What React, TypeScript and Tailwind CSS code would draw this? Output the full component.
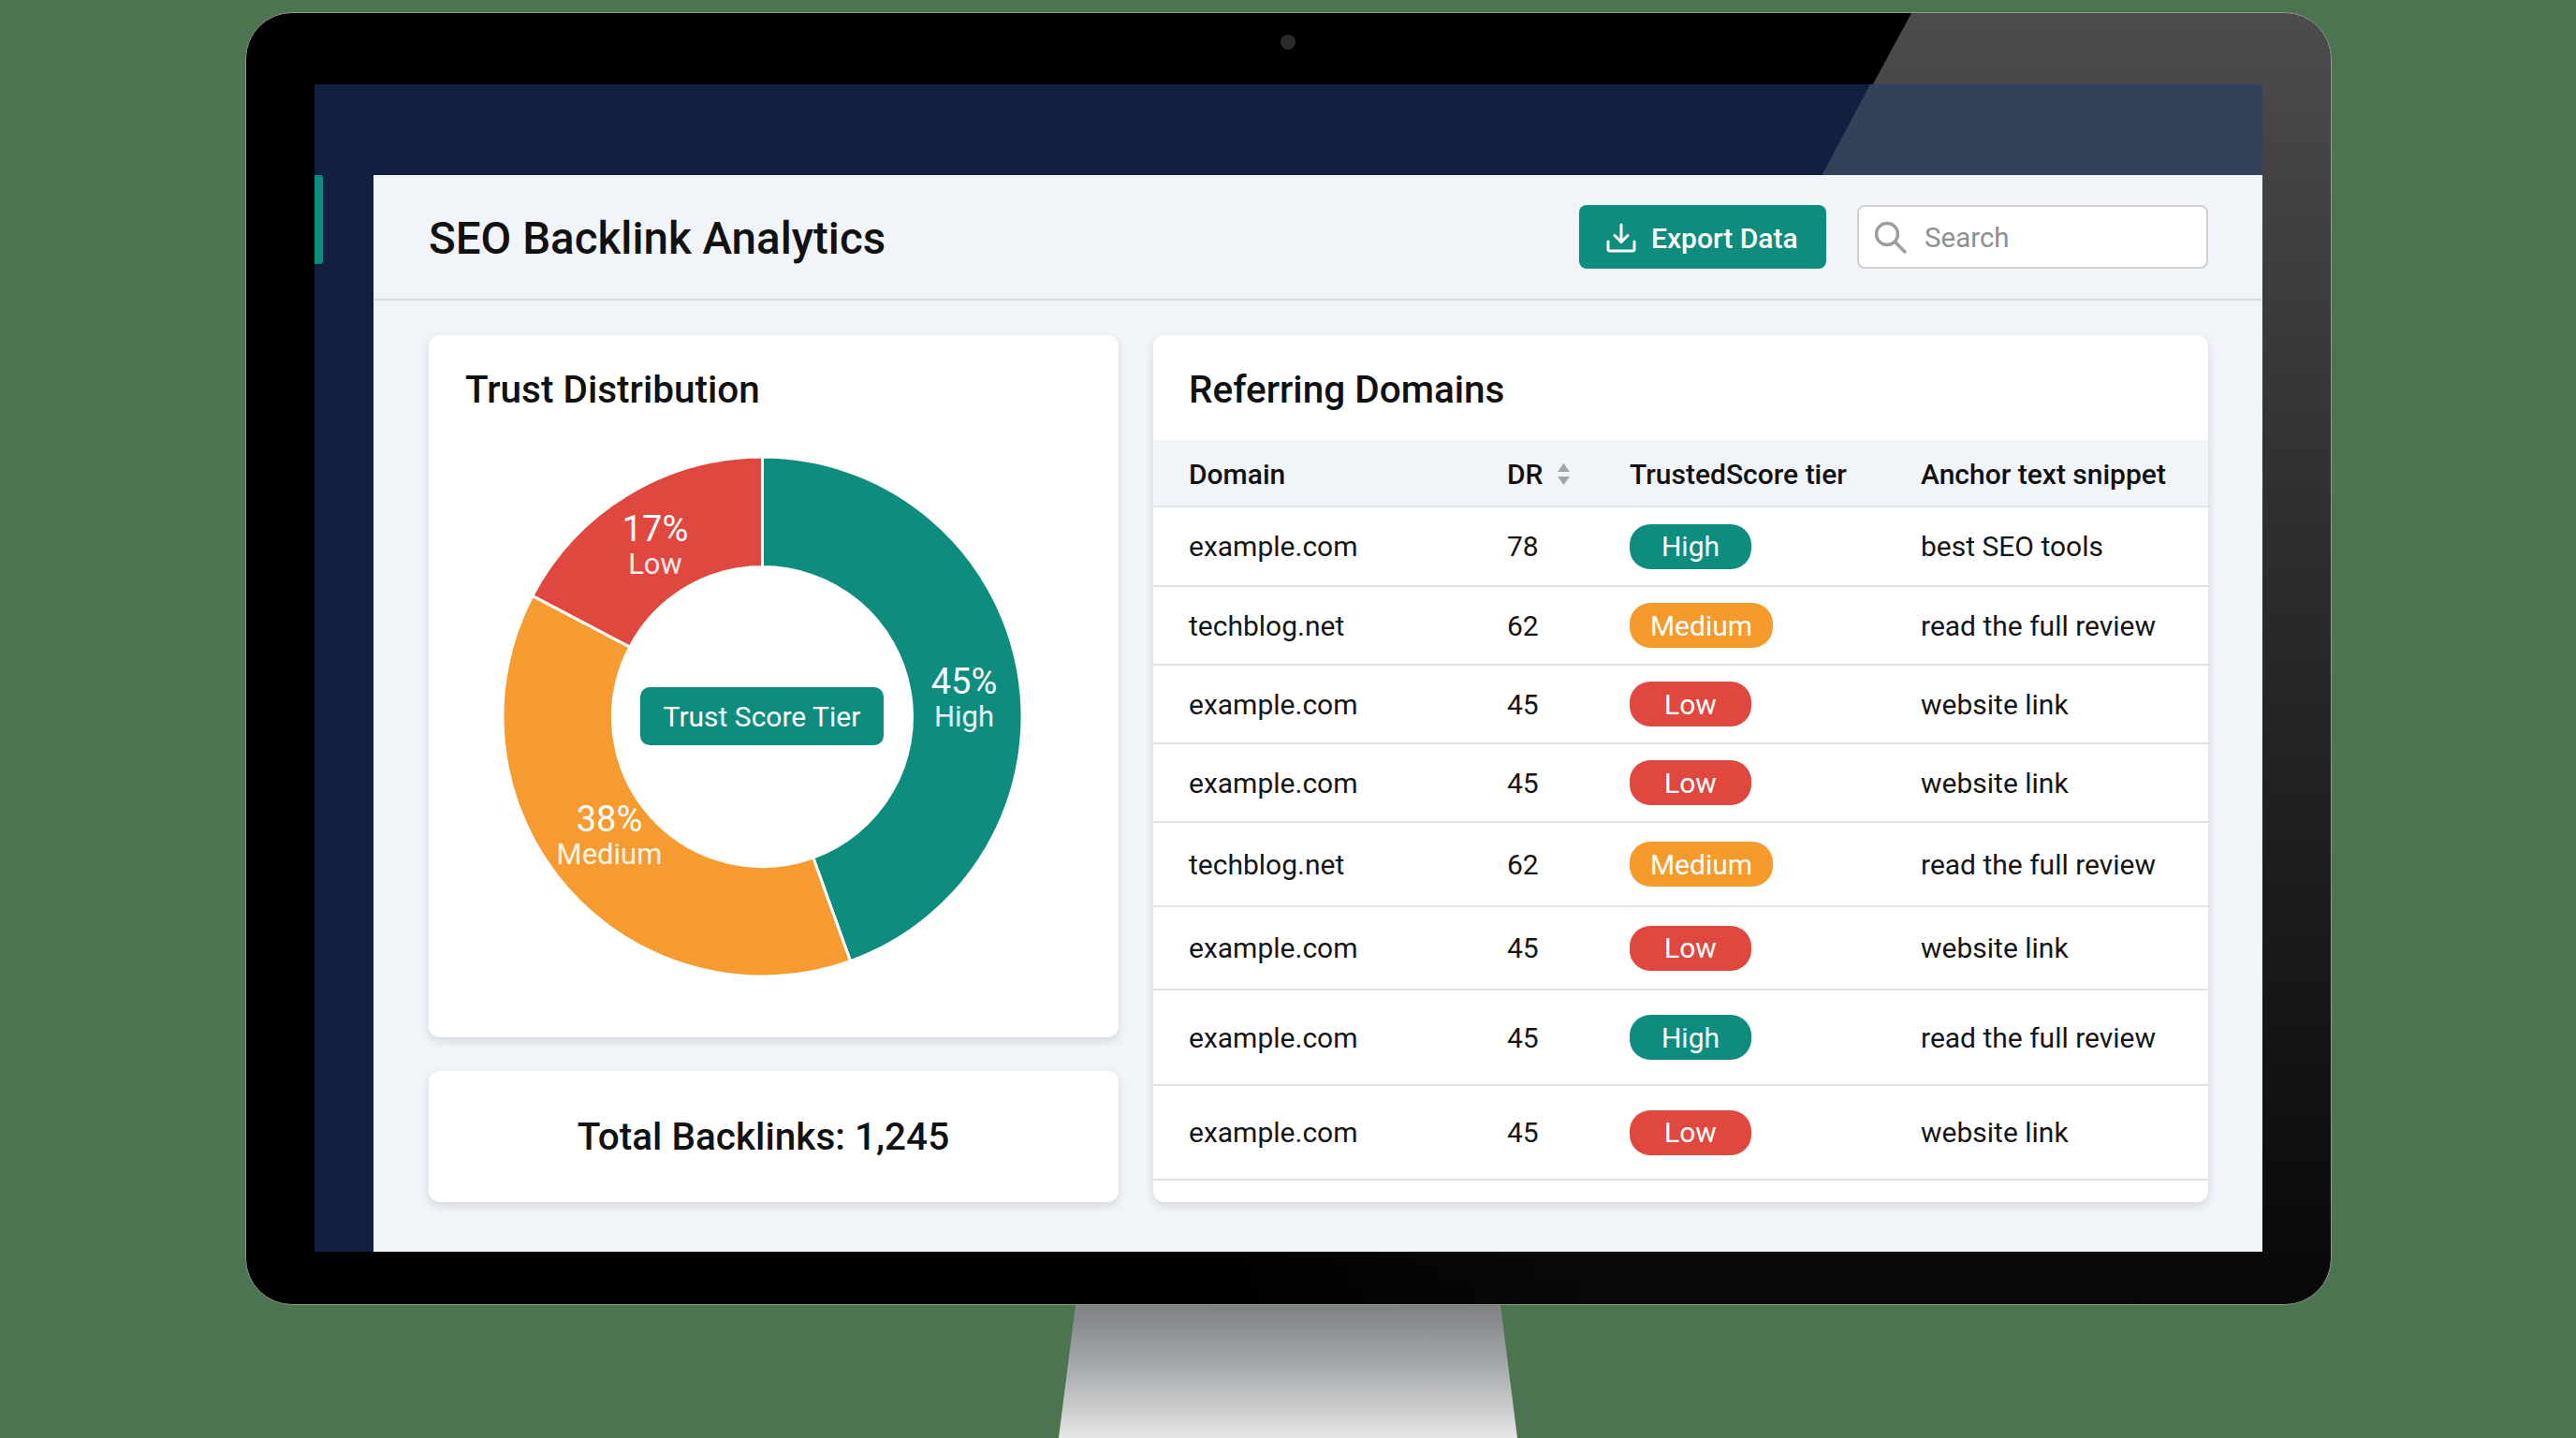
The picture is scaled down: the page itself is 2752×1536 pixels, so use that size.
// SEO backlink dashboard shown on a desktop monitor

const rows = [
  { domain: 'example.com', dr: 78, tier: 'High', anchor: 'best SEO tools', height: 'h-[85px]' },
  { domain: 'techblog.net', dr: 62, tier: 'Medium', anchor: 'read the full review', height: 'h-[84px]' },
  { domain: 'example.com', dr: 45, tier: 'Low', anchor: 'website link', height: 'h-[84px]' },
  { domain: 'example.com', dr: 45, tier: 'Low', anchor: 'website link', height: 'h-[84px]' },
  { domain: 'techblog.net', dr: 62, tier: 'Medium', anchor: 'read the full review', height: 'h-[90px]' },
  { domain: 'example.com', dr: 45, tier: 'Low', anchor: 'website link', height: 'h-[89px]' },
  { domain: 'example.com', dr: 45, tier: 'High', anchor: 'read the full review', height: 'h-[102px]' },
  { domain: 'example.com', dr: 45, tier: 'Low', anchor: 'website link', height: 'h-[101px]' },
];

const tierStyles: Record<string, string> = {
  High: 'w-[130px] bg-[#0e8d7f]',
  Medium: 'w-[153px] bg-[#f59b2e]',
  Low: 'w-[130px] bg-[#e0483f]',
};

const segments = [
  { from: 0, to: 0.445, color: '#0e8c7e' },
  { from: 0.445, to: 0.827, color: '#f59b2f' },
  { from: 0.827, to: 1, color: '#e0473f' },
];

function arcPath(from: number, to: number) {
  const c = 278.5;
  const R = 277.5;
  const r = 160;
  const pt = (rad: number, f: number) => {
    const a = f * Math.PI * 2;
    return `${c + rad * Math.sin(a)} ${c - rad * Math.cos(a)}`;
  };
  const large = to - from > 0.5 ? 1 : 0;
  return `M${pt(R, from)} A${R} ${R} 0 ${large} 1 ${pt(R, to)} L${pt(r, to)} A${r} ${r} 0 ${large} 0 ${pt(r, from)} Z`;
}

function ChartLabel({ pct, name, pos }: { pct: string; name: string; pos: string }) {
  return (
    <div className={`absolute flex -translate-x-1/2 -translate-y-1/2 flex-col items-center text-white ${pos}`}>
      <span className="text-[38px] leading-[37px]">{pct}</span>
      <span className="text-[31px] leading-[37px] text-white/90">{name}</span>
    </div>
  );
}

function Donut() {
  return (
    <div className="relative mt-[17px] ml-[78px] h-[557px] w-[557px]">
      <svg width="557" height="557" viewBox="0 0 557 557">
        {segments.map((s) => (
          <path key={s.color} d={arcPath(s.from, s.to)} fill={s.color} stroke="#fff" strokeWidth="3" />
        ))}
      </svg>
      <ChartLabel pct="45%" name="High" pos="top-[260px] left-[494px]" />
      <ChartLabel pct="17%" name="Low" pos="top-[97px] left-[164px]" />
      <ChartLabel pct="38%" name="Medium" pos="top-[407px] left-[115px]" />
      <div className="absolute top-[247px] left-[148px] flex h-[62px] w-[260px] items-center justify-center rounded-[10px] bg-[#0e8c7e] text-[30px] text-white">
        Trust Score Tier
      </div>
    </div>
  );
}

function SortArrows() {
  return (
    <svg width="17" height="25" viewBox="0 0 17 25" className="ml-[14px]">
      <path d="M8.5 1 L15 10 L2 10 Z" fill="#a3a5a8" />
      <path d="M8.5 24 L15 15 L2 15 Z" fill="#a3a5a8" />
    </svg>
  );
}

function ReferringDomains() {
  return (
    <div className="flex h-[926px] w-[1127px] flex-col overflow-hidden rounded-[12px] bg-white shadow-[0_4px_10px_rgba(30,40,60,0.14)]">
      <h2 className="flex h-[112px] items-center px-[38px] pt-[4px] text-[40.5px] font-medium text-[#111]">
        Referring Domains
      </h2>
      <div className="grid h-[72px] grid-cols-[340px_131px_311px_1fr] items-center border-b-2 border-[#e0e3e8] bg-[#f1f4f8] pt-[3px] pl-[38px] text-[30px] font-medium text-[#111]">
        <span>Domain</span>
        <span className="flex items-center">
          DR
          <SortArrows />
        </span>
        <span>TrustedScore tier</span>
        <span>Anchor text snippet</span>
      </div>
      {rows.map((row, i) => (
        <div
          key={i}
          className={`grid grid-cols-[340px_131px_311px_1fr] items-center border-b-2 border-[#dfe2e6] pl-[38px] text-[30px] text-[#151515] ${row.height}`}
        >
          <span>{row.domain}</span>
          <span>{row.dr}</span>
          <span>
            <span className={`flex h-[48px] items-center justify-center rounded-[22px] text-[30px] text-white ${tierStyles[row.tier]}`}>
              {row.tier}
            </span>
          </span>
          <span>{row.anchor}</span>
        </div>
      ))}
    </div>
  );
}

function Dashboard() {
  return (
    <main className="relative flex-1 bg-[#f1f4f8]">
      <header className="flex h-[134px] items-center justify-between border-b-2 border-[#d9dce1] pr-[58px] pl-[59px]">
        <h1 className="pt-[5px] text-[47.5px] font-medium text-[#111]">SEO Backlink Analytics</h1>
        <div className="flex items-center gap-[33px]">
          <button className="flex h-[68px] w-[264px] items-center gap-[16px] rounded-[8px] bg-[#0e8d7f] pt-[2px] pl-[29px] text-[30px] font-medium text-white">
            <svg width="32" height="32" viewBox="0 0 32 32" fill="none" stroke="#fff" strokeWidth="3" strokeLinecap="round" strokeLinejoin="round">
              <path d="M16 2 V20" />
              <path d="M9 13.5 L16 20.5 L23 13.5" />
              <path d="M2 20 V28 Q2 30 4 30 H28 Q30 30 30 28 V20" />
            </svg>
            Export Data
          </button>
          <div className="flex h-[68px] w-[375px] items-center gap-[18px] rounded-[8px] border-2 border-[#cfd1d5] bg-white pt-[2px] pl-[16px] text-[29.5px] text-[#8d9094]">
            <svg width="36" height="36" viewBox="0 0 36 36" fill="none" stroke="#9b9da0" strokeWidth="3.5" strokeLinecap="round">
              <circle cx="14" cy="14" r="11.5" />
              <path d="M22.5 22.5 L33 33" />
            </svg>
            Search
          </div>
        </div>
      </header>
      <div className="flex gap-[37px] pt-[37px] pl-[59px]">
        <div className="flex w-[737px] flex-col gap-[36px]">
          <section className="h-[750px] rounded-[12px] bg-white shadow-[0_4px_10px_rgba(30,40,60,0.14)]">
            <h2 className="flex h-[112px] items-center px-[39px] pt-[4px] text-[40.5px] font-medium text-[#111]">
              Trust Distribution
            </h2>
            <Donut />
          </section>
          <section className="flex h-[140px] items-center justify-center rounded-[12px] bg-white pr-[22px] text-[40.5px] font-medium text-[#111] shadow-[0_4px_10px_rgba(30,40,60,0.14)]">
            Total Backlinks: 1,245
          </section>
        </div>
        <ReferringDomains />
      </div>
    </main>
  );
}

export default function App() {
  return (
    <div className="flex h-[1536px] w-[2752px] flex-col items-center overflow-hidden bg-[#4d7450] pt-[13px] font-['Roboto',sans-serif]">
      <div className="relative isolate ml-[1px] h-[1381px] w-[2229px] shrink-0 overflow-hidden rounded-[50px] border border-[#8f9a90] bg-black px-[73px] pt-[76px]">
        <div className="absolute inset-0 bg-linear-to-b from-white/30 via-white/18 via-40% to-white/3 [clip-path:polygon(1779px_0,100%_0,100%_100%,1033px_100%)] [mask-image:linear-gradient(to_right,transparent_1000px,black_1450px)]" />
        <div className="absolute top-[23px] left-[1105px] h-[16px] w-[16px] rounded-full bg-[#2a2a2a]" />
        <div className="relative flex h-[1247px] bg-[#11203f] pt-[97px]">
          <div className="absolute inset-0 bg-white/15 [clip-path:polygon(1662px_0,100%_0,100%_100%,1000px_100%)]" />
          <aside className="relative w-[63px] shrink-0">
            <div className="h-[95px] w-[9px] rounded-r-[3px] bg-[#0e8d7f]" />
          </aside>
          <Dashboard />
        </div>
      </div>
      <div className="h-[142px] w-[490px] shrink-0 bg-linear-to-b from-[#7f8184] via-[#aaadb0] to-[#e6e6e6] [clip-path:polygon(18px_0,472px_0,100%_100%,0_100%)]" />
    </div>
  );
}
